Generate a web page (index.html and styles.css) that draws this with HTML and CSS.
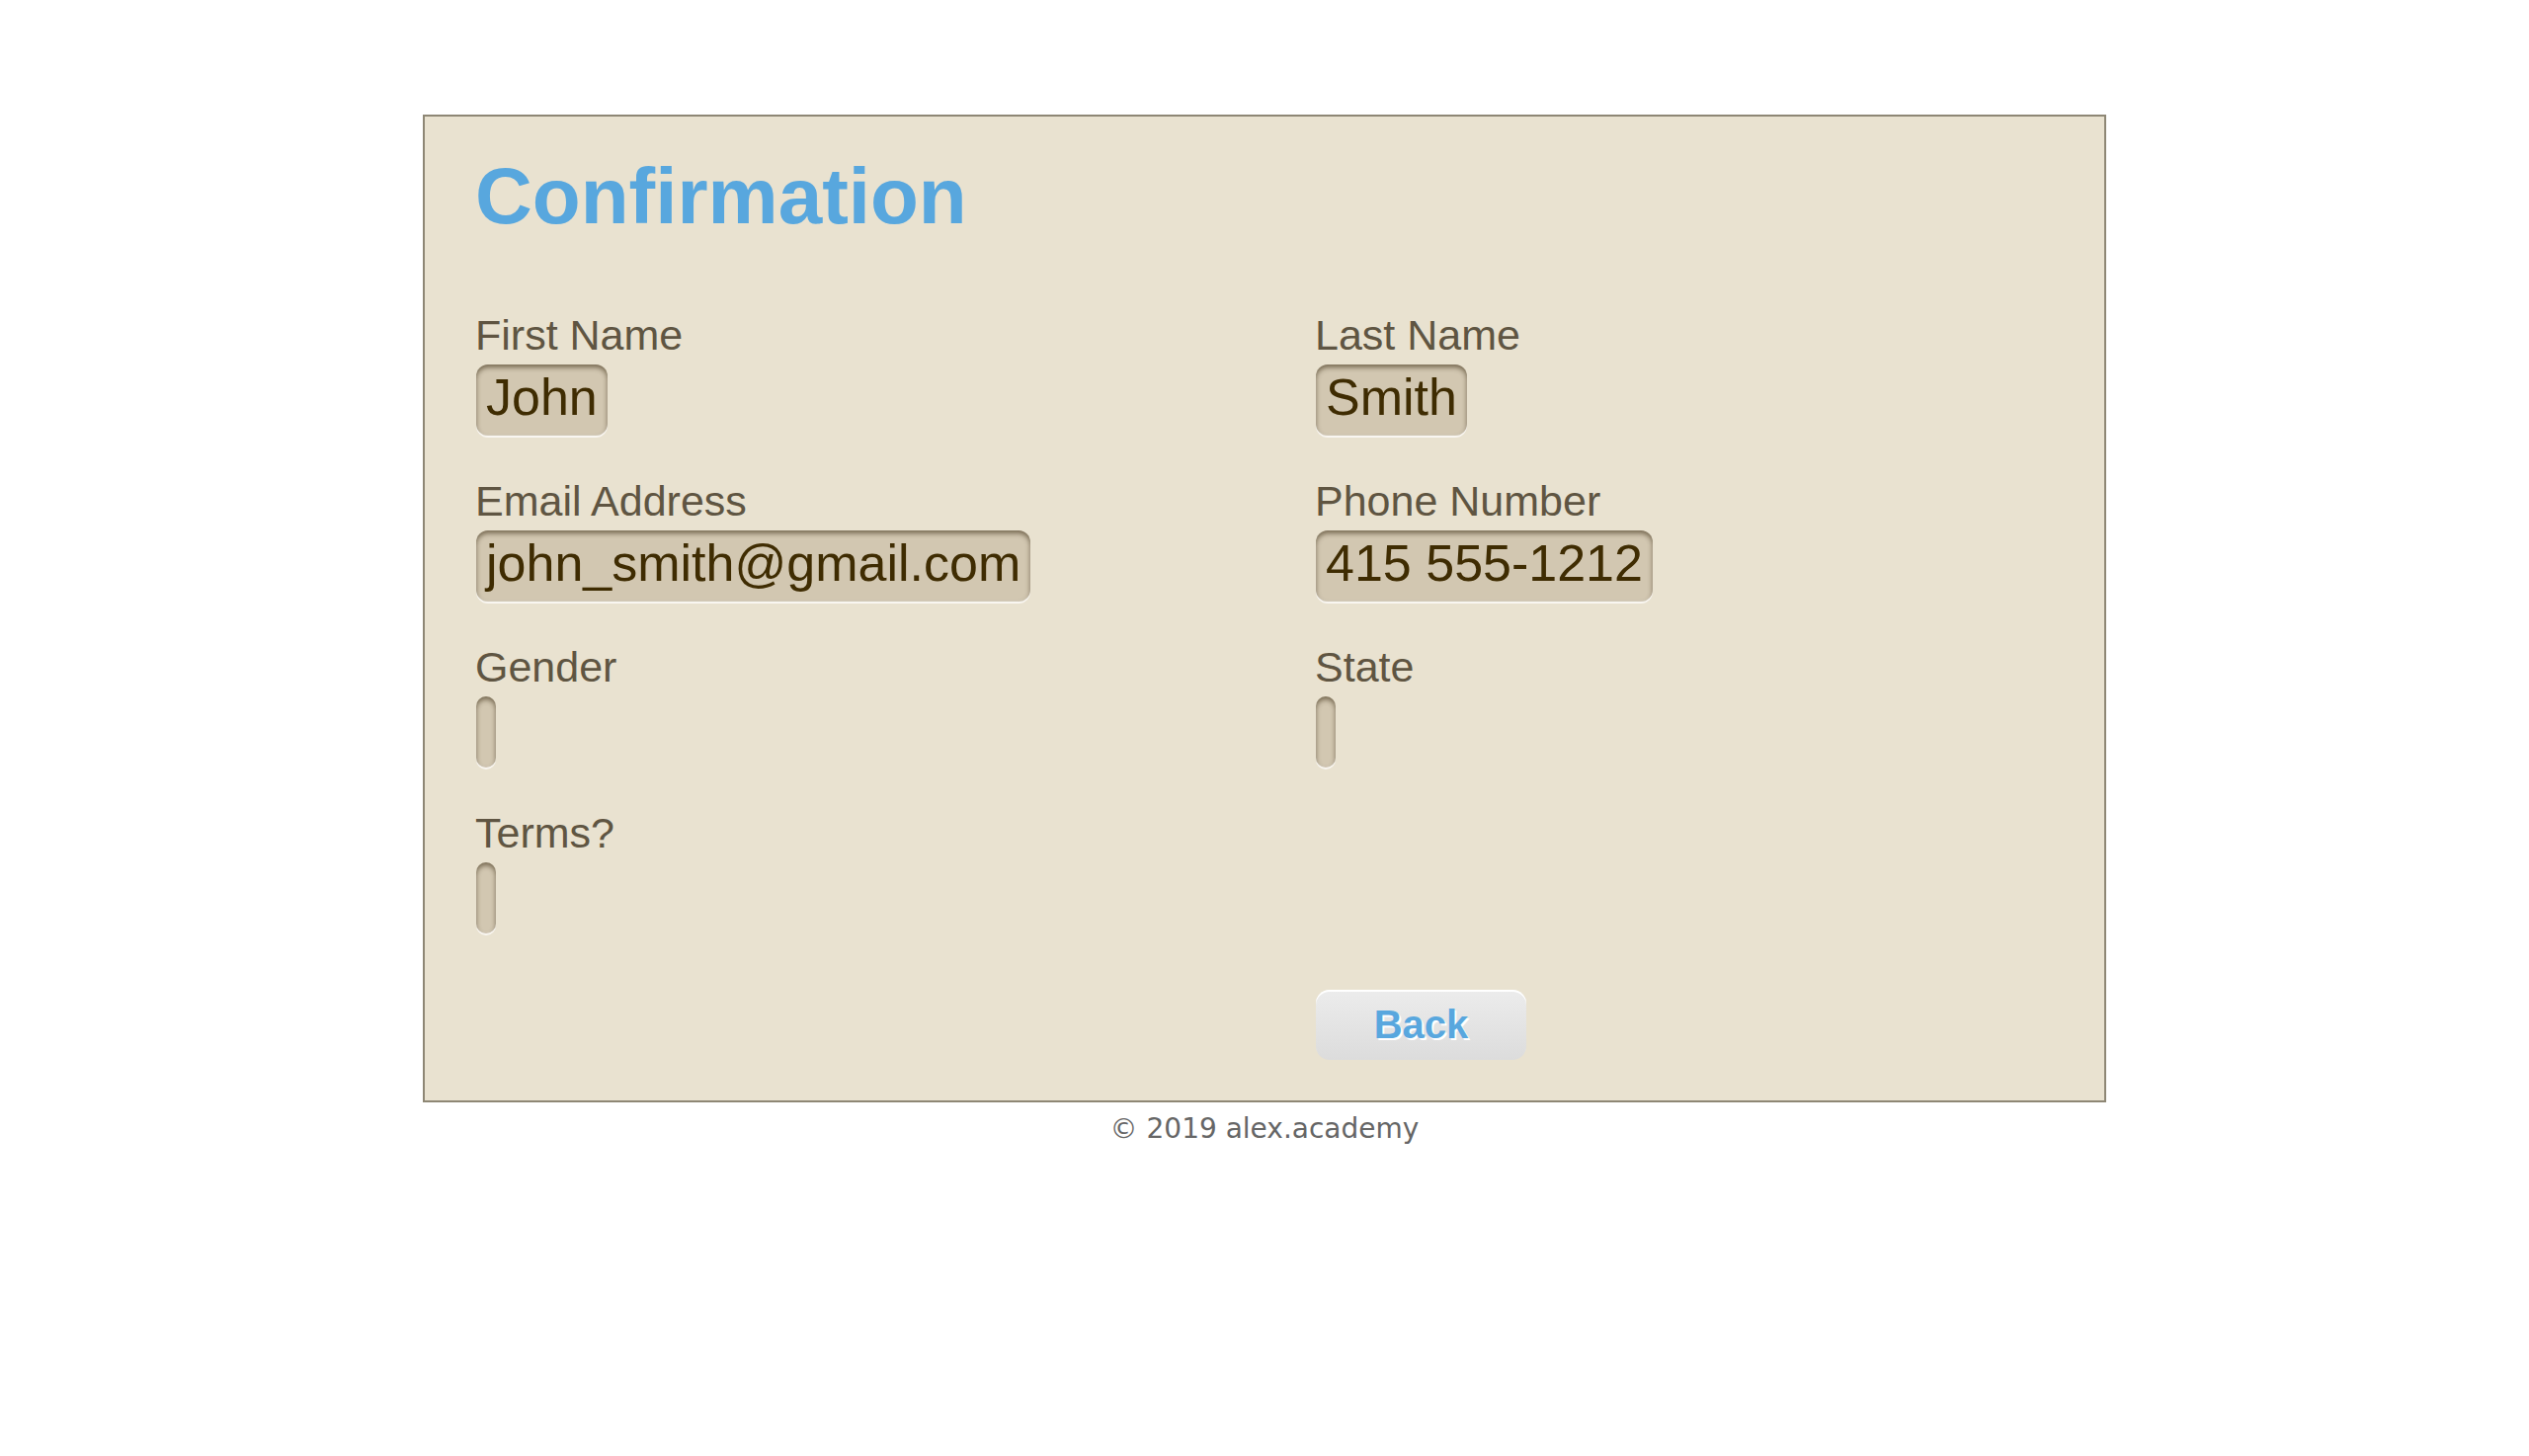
FILE: index.html
```html
<!DOCTYPE html>
<html lang="en">
<head>
<meta charset="utf-8">
<title>Confirmation</title>
<link rel="stylesheet" href="styles.css">
</head>
<body>
<main class="page">
  <section class="panel">
    <h1 class="title">Confirmation</h1>
    <div class="fields">
      <div class="field">
        <div class="label">First Name</div>
        <div class="value">John</div>
      </div>
      <div class="field">
        <div class="label">Last Name</div>
        <div class="value">Smith</div>
      </div>
      <div class="field">
        <div class="label">Email Address</div>
        <div class="value">john_smith@gmail.com</div>
      </div>
      <div class="field">
        <div class="label">Phone Number</div>
        <div class="value">415 555-1212</div>
      </div>
      <div class="field">
        <div class="label">Gender</div>
        <div class="value"></div>
      </div>
      <div class="field">
        <div class="label">State</div>
        <div class="value"></div>
      </div>
      <div class="field">
        <div class="label">Terms?</div>
        <div class="value"></div>
      </div>
      <div class="field"></div>
      <div class="field empty"></div>
      <div class="actions">
        <button class="back" type="button">Back</button>
      </div>
    </div>
  </section>
  <footer class="footer">© 2019 alex.academy</footer>
</main>
</body>
</html>
```

FILE: styles.css
```css
html, body {
  margin: 0;
  padding: 0;
  background: #ffffff;
}

body {
  font-family: "Liberation Sans", Arial, Helvetica, sans-serif;
}

.page {
  display: flex;
  flex-direction: column;
  align-items: center;
  padding-top: 116px;
}

.panel {
  box-sizing: border-box;
  width: 1704px;
  height: 1000px;
  background: #e9e2d0;
  border: 2px solid #8e8775;
  padding: 0 50px 0 51px;
}

.title {
  margin: 35px 0 0 0;
  font-size: 80px;
  line-height: 92px;
  font-weight: bold;
  color: #58a7de;
}

.fields {
  margin-top: 70px;
  display: grid;
  grid-template-columns: 750px 750px;
  column-gap: 100px;
  row-gap: 42px;
}

.field {
  display: flex;
  flex-direction: column;
  align-items: flex-start;
  min-height: 126px;
}

.field.empty {
  min-height: 0;
}

.label {
  font-size: 43px;
  line-height: 48px;
  color: #5f5542;
}

.value {
  box-sizing: border-box;
  margin: 6px 0 0 1px;
  height: 72px;
  min-width: 20px;
  padding: 0 10px 6px;
  font-size: 52px;
  line-height: 66px;
  color: #3f2c02;
  background: #d2c7b1;
  border-radius: 12px;
  box-shadow: inset 0 3px 5px rgba(60, 45, 20, 0.6), inset 0 -1px 2px rgba(255, 255, 255, 0.25), 0 2px 0 rgba(255, 255, 255, 0.7);
  white-space: nowrap;
}

.actions {
  grid-column: 2;
  padding-left: 1px;
  margin-top: 15px;
}

.back {
  box-sizing: border-box;
  width: 213px;
  height: 71px;
  border: 0;
  border-radius: 14px;
  background: linear-gradient(#ececec, #dcdcdc);
  box-shadow: inset 0 2px 0 #ffffff;
  font-family: "Liberation Sans", Arial, Helvetica, sans-serif;
  font-size: 40px;
  font-weight: bold;
  color: #58a7de;
  text-shadow: 2px 2px 0 #ffffff;
  padding: 0;
  cursor: pointer;
}

.footer {
  margin-top: 11px;
  font-family: "DejaVu Sans", Verdana, sans-serif;
  font-size: 28px;
  line-height: 32px;
  color: #666666;
}
```
